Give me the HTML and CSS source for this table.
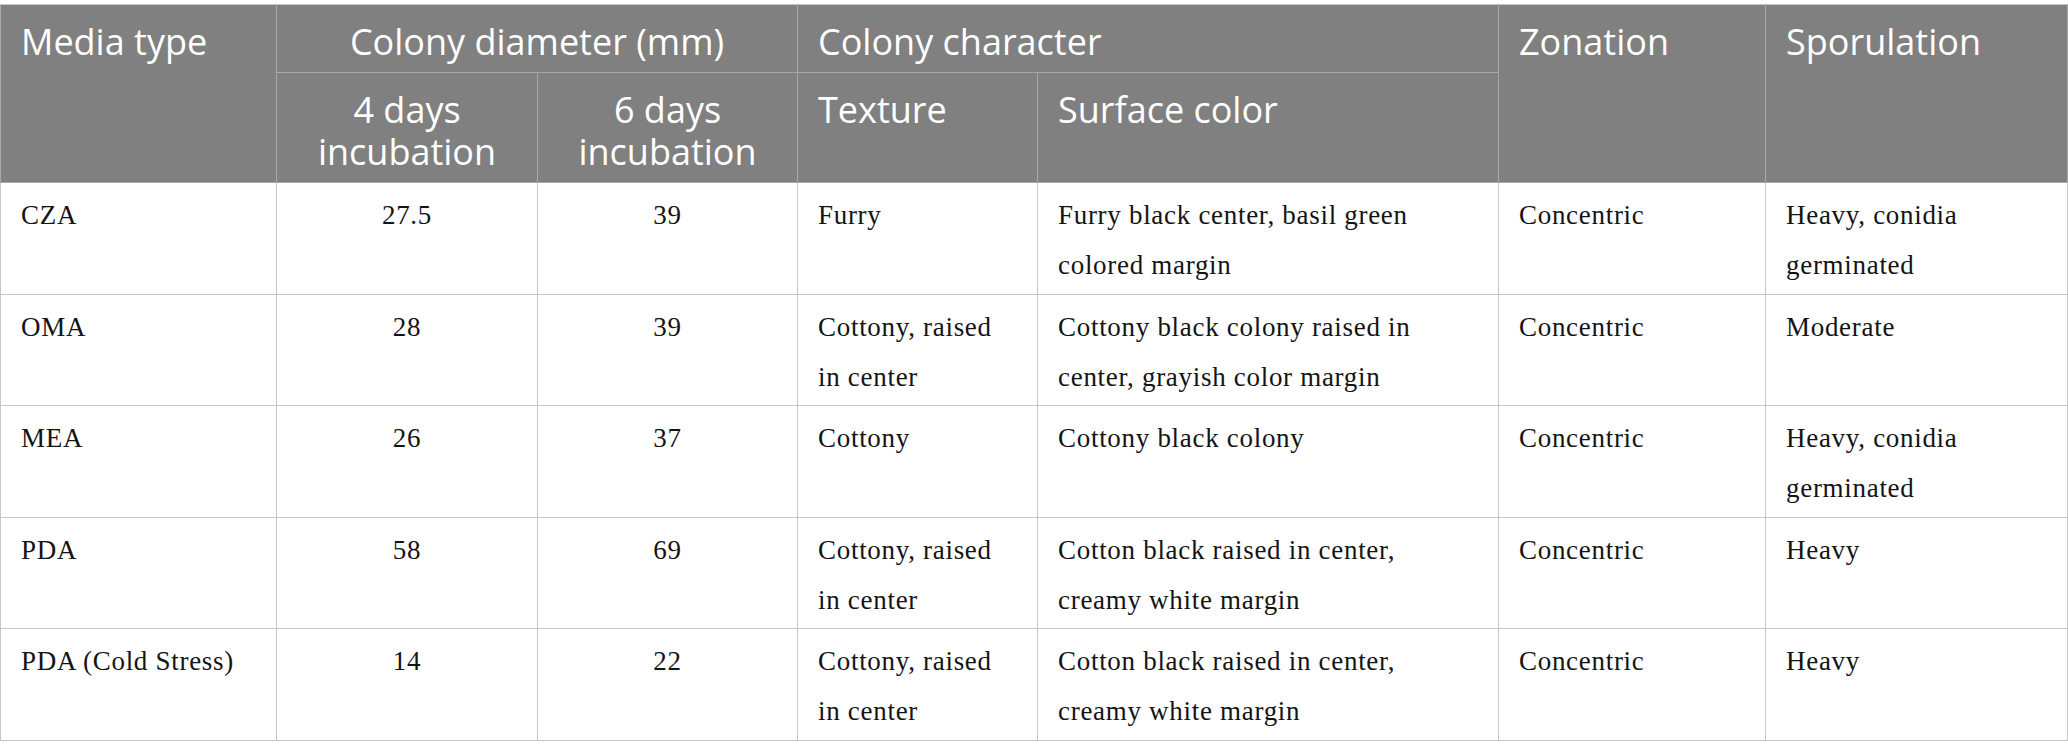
FILE: index.html
```html
<!DOCTYPE html>
<html lang="en">
<head>
<meta charset="utf-8">
<title>Colony characteristics</title>
<link rel="stylesheet" href="styles.css">
</head>
<body>
<table class="data-table">
  <colgroup>
    <col class="c-media">
    <col class="c-d4">
    <col class="c-d6">
    <col class="c-texture">
    <col class="c-surface">
    <col class="c-zonation">
    <col class="c-spor">
  </colgroup>
  <thead>
    <tr class="head-row-1">
      <th rowspan="2">Media type</th>
      <th colspan="2" class="center">Colony diameter (mm)</th>
      <th colspan="2">Colony character</th>
      <th rowspan="2">Zonation</th>
      <th rowspan="2">Sporulation</th>
    </tr>
    <tr class="head-row-2">
      <th class="center">4 days incubation</th>
      <th class="center">6 days incubation</th>
      <th>Texture</th>
      <th>Surface color</th>
    </tr>
  </thead>
  <tbody>
    <tr>
      <td>CZA</td>
      <td class="center">27.5</td>
      <td class="center">39</td>
      <td>Furry</td>
      <td>Furry black center, basil green colored margin</td>
      <td>Concentric</td>
      <td>Heavy, conidia germinated</td>
    </tr>
    <tr>
      <td>OMA</td>
      <td class="center">28</td>
      <td class="center">39</td>
      <td>Cottony, raised in center</td>
      <td>Cottony black colony raised in center, grayish color margin</td>
      <td>Concentric</td>
      <td>Moderate</td>
    </tr>
    <tr>
      <td>MEA</td>
      <td class="center">26</td>
      <td class="center">37</td>
      <td>Cottony</td>
      <td>Cottony black colony</td>
      <td>Concentric</td>
      <td>Heavy, conidia germinated</td>
    </tr>
    <tr>
      <td>PDA</td>
      <td class="center">58</td>
      <td class="center">69</td>
      <td>Cottony, raised in center</td>
      <td>Cotton black raised in center, creamy white margin</td>
      <td>Concentric</td>
      <td>Heavy</td>
    </tr>
    <tr>
      <td>PDA (Cold Stress)</td>
      <td class="center">14</td>
      <td class="center">22</td>
      <td>Cottony, raised in center</td>
      <td>Cotton black raised in center, creamy white margin</td>
      <td>Concentric</td>
      <td>Heavy</td>
    </tr>
  </tbody>
</table>
</body>
</html>
```

FILE: styles.css
```css
html, body {
  margin: 0;
  padding: 0;
  background: #ffffff;
}

body {
  padding-top: 4px;
}

.data-table {
  width: 2067px;
  table-layout: fixed;
  border-collapse: collapse;
  border: 1px solid #c6c6c6;
}

.c-media { width: 276px; }
.c-d4 { width: 261px; }
.c-d6 { width: 260px; }
.c-texture { width: 240px; }
.c-surface { width: 461px; }
.c-zonation { width: 267px; }
.c-spor { width: 302px; }

.data-table th {
  background: #7f807f;
  color: #ffffff;
  font-family: "Open Sans", "Noto Sans", sans-serif;
  font-weight: 400;
  font-size: 36px;
  line-height: 42px;
  text-align: left;
  vertical-align: top;
  padding: 16px 20px 9px;
  border: 1px solid #a9a9a9;
}

.data-table thead tr:first-child th {
  border-top-color: #c6c6c6;
}

.data-table td {
  font-family: "Liberation Serif", "Times New Roman", serif;
  font-size: 27px;
  letter-spacing: 0.7px;
  line-height: 50px;
  color: #141414;
  vertical-align: top;
  text-align: left;
  padding: 7px 20px 3.5px;
  height: 100px;
  border: 1px solid #c6c6c6;
  box-sizing: content-box;
}

.data-table .center {
  text-align: center;
}
```
